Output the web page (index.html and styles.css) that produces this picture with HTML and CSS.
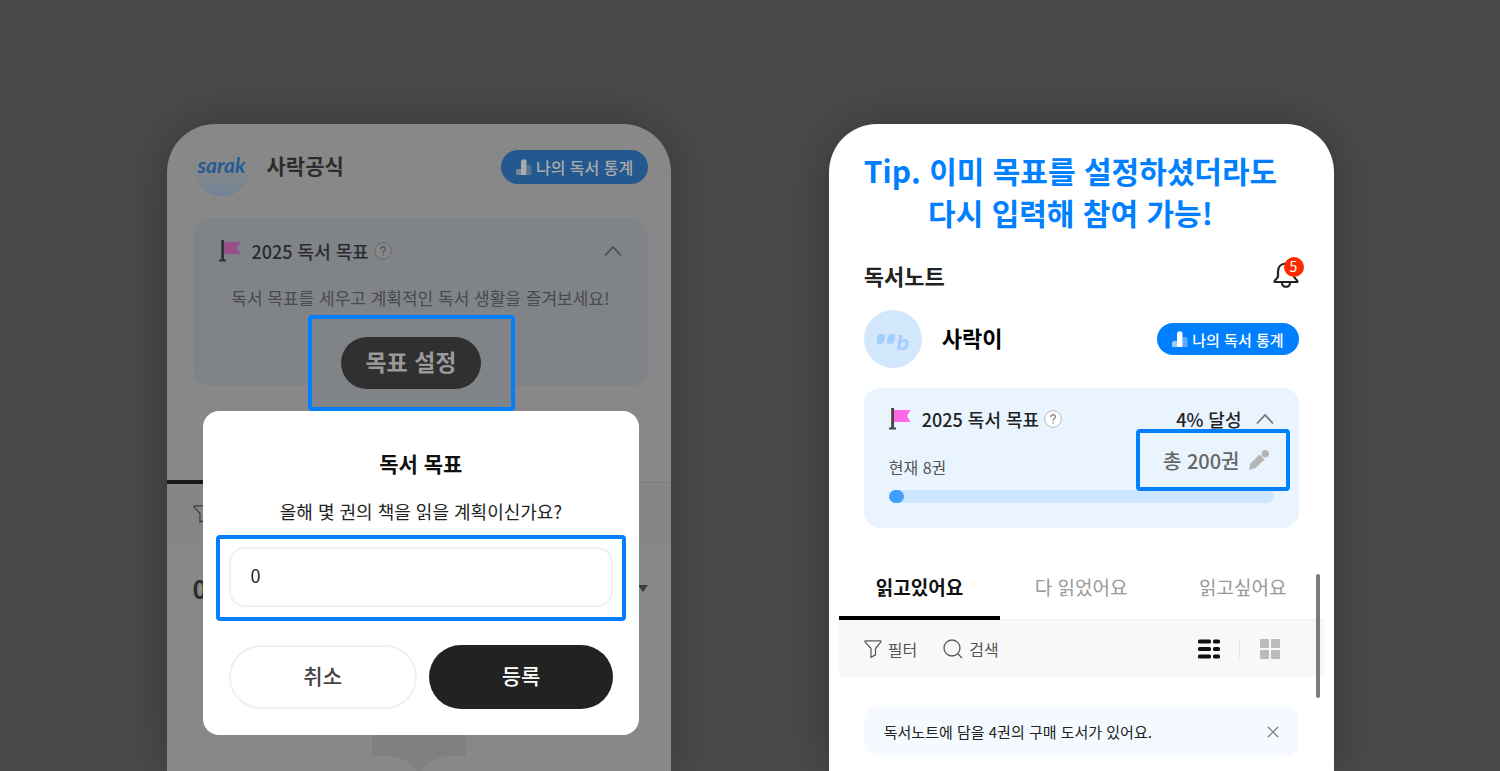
FILE: index.html
```
<!DOCTYPE html>
<html lang="ko">
<head>
    <meta charset="utf-8">
    <meta name="viewport" content="width=device-width, initial-scale=1.0">
    <title>독서 목표</title>
    <link rel="stylesheet" href="styles.css">
</head>

<body>
<svg class="defs" aria-hidden="true">
    <symbol id="flag" viewBox="0 0 22 22">
        <path class="flag-cloth" d="M4 2h17.500l-3.500 6 3.500 6H4z"/>
        <path class="flag-pole" d="M2.200 0h2.800v19.500H7V21.500H0v-2h2.200z"/>
    </symbol>
    <symbol id="bars" viewBox="0 0 16 16">
        <path d="M0 16v-4a2 2 0 0 1 2-2h3v6z" opacity=".6"/>
        <path d="M5 16V3a2.500 2.500 0 0 1 5.500 0v13z"/>
        <path d="M10.500 16V6H13.500a2 2 0 0 1 2 2v8z" opacity=".35"/>
    </symbol>
    <symbol id="help" viewBox="0 0 18 18">
        <circle class="help-ring" cx="9" cy="9" r="8.300"/>
        <path class="help-mark" d="M6.600 7.200C6.600 4 11.600 4 11.500 7 11.400 8.700 9 8.700 9 10.800M9 12.300v1.300"/>
    </symbol>
    <symbol id="chevron" viewBox="0 0 18 12">
        <path d="M1 10.500 9 2l8 8.500" fill="none" stroke="currentColor" stroke-width="1.800"/>
    </symbol>
    <symbol id="filter" viewBox="0 0 18 18">
        <path d="M1.500.8h15c.6 0 .7.600.4 1L11.500 8.500v6.300L7 17.300V8.500L1 1.800C.700 1.400.900.800 1.500.800z" fill="none" stroke="currentColor" stroke-width="1.200"/>
    </symbol>
</svg>

<div class="stage">

    <!-- 목표 설정 -->
    <section class="phone phone-dim">
        <div class="profile">
            <span class="avatar avatar-sarak">sarak</span>
            <strong class="name">사락공식</strong>
            <button type="button" class="stats"><svg width="16" height="16"><use href="#bars"/></svg>나의 독서 통계</button>
        </div>

        <div class="card">
            <div class="card-head">
                <svg class="flag" width="22" height="22"><use href="#flag"/></svg>
                <h2>2025 독서 목표</h2>
                <svg class="help" width="18" height="18"><use href="#help"/></svg>
                <button type="button" class="fold" aria-label="접기"><svg width="18" height="12"><use href="#chevron"/></svg></button>
            </div>
            <p class="card-text">독서 목표를 세우고 계획적인 독서 생활을 즐겨보세요!</p>
            <div class="mark mark-goal">
                <button type="button" class="goal-btn">목표 설정</button>
            </div>
        </div>

        <div class="tab-line"></div>
        <div class="tools">
            <svg width="18" height="18"><use href="#filter"/></svg>
        </div>
        <div class="count">
            <b>0</b>
            <span class="caret"></span>
        </div>
        <svg class="empty" width="94" height="90" viewBox="0 0 94 90">
            <path d="M0 0h94v41H77C63 42 53 49 47 58 41 49 31 42 15 41H0z"/>
        </svg>

        <form class="modal">
            <h2>독서 목표</h2>
            <label for="goal">올해 몇 권의 책을 읽을 계획이신가요?</label>
            <div class="mark mark-input">
                <input type="text" id="goal" value="0">
            </div>
            <div class="modal-btns">
                <button type="button" class="cancel">취소</button>
                <button type="button" class="submit">등록</button>
            </div>
        </form>
    </section>

    <!-- 목표 수정 -->
    <section class="phone phone-note">
        <h1 class="tip">Tip. 이미 목표를 설정하셨더라도<br>다시 입력해 참여 가능!</h1>

        <div class="title">
            <h2>독서노트</h2>
            <button type="button" class="bell" aria-label="알림">
                <svg width="26" height="28" viewBox="0 0 26 28" fill="none" stroke="#222" stroke-width="2.200">
                    <path d="M13 2.500C8 2.500 5 6 5 10.500v4.500C5 18 1.500 18 1.500 21h23C24.500 18 21 18 21 15v-4.500C21 6 18 2.500 13 2.500z" stroke-linejoin="round"/>
                    <path d="M9 22c0 5 8 5 8 0"/>
                </svg>
                <span class="badge">5</span>
            </button>
        </div>

        <div class="profile">
            <span class="avatar avatar-note">
                <svg width="20" height="12" viewBox="0 0 20 12">
                    <path d="M4 1h2.500q3 0 2.400 3l-.700 3.500q-.800 3.500-4.200 3.500H3Q0 11 .700 8L1.300 4Q2 1 4 1zM14.500 1H17q3 0 2.400 3l-.700 3.500q-.800 3.500-4.200 3.500h-1q-3 0-2.300-3l.600-4Q12.500 1 14.500 1z"/>
                </svg>
                <i>b</i>
            </span>
            <strong class="name">사락이</strong>
            <button type="button" class="stats"><svg width="16" height="16"><use href="#bars"/></svg>나의 독서 통계</button>
        </div>

        <div class="card">
            <div class="card-head">
                <svg class="flag" width="22" height="22"><use href="#flag"/></svg>
                <h2>2025 독서 목표</h2>
                <svg class="help" width="18" height="18"><use href="#help"/></svg>
                <span class="percent">4% 달성</span>
                <button type="button" class="fold" aria-label="접기"><svg width="18" height="12"><use href="#chevron"/></svg></button>
            </div>
            <div class="status">
                <span class="now">현재 8권</span>
                <button type="button" class="mark mark-total">총 200권
                    <svg width="22" height="22" viewBox="0 0 22 22">
                        <path d="M1 21l1.500-6.500L11.500 5.500l5 5L7.500 19z"/>
                        <circle cx="17.300" cy="4.700" r="3.700"/>
                    </svg>
                </button>
            </div>
            <div class="bar"><div class="bar-fill" style="width: 4%"></div></div>
        </div>

        <div class="list">
            <nav class="tabs">
                <a href="#" class="on">읽고있어요</a>
                <a href="#">다 읽었어요</a>
                <a href="#">읽고싶어요</a>
            </nav>
            <div class="tools">
                <button type="button"><svg width="18" height="18"><use href="#filter"/></svg>필터</button>
                <button type="button" class="search">
                    <svg width="20" height="20" viewBox="0 0 20 20" fill="none" stroke="currentColor" stroke-width="1.300"><circle cx="9" cy="9" r="8"/><path d="m14.500 14.500 4.500 4.500"/></svg>검색
                </button>
                <div class="views">
                    <button type="button" aria-label="목록">
                        <svg width="22" height="20" viewBox="0 0 22 20" fill="#111"><rect y=".500" width="13" height="4" rx="1.500"/><rect x="15" y=".500" width="7" height="4" rx="1.500"/><rect y="8" width="13" height="4" rx="1.500"/><rect x="15" y="8" width="7" height="4" rx="1.500"/><rect y="15.500" width="13" height="4" rx="1.500"/><rect x="15" y="15.500" width="7" height="4" rx="1.500"/></svg>
                    </button>
                    <button type="button" aria-label="격자">
                        <svg width="20" height="20" viewBox="0 0 20 20" fill="#bbb"><rect width="9" height="9" rx="1"/><rect x="11" width="9" height="9" rx="1"/><rect y="11" width="9" height="9" rx="1"/><rect x="11" y="11" width="9" height="9" rx="1"/></svg>
                    </button>
                </div>
            </div>
            <span class="scroll"></span>
        </div>

        <div class="notice">
            <p>독서노트에 담을 4권의 구매 도서가 있어요.</p>
            <button type="button" aria-label="닫기">
                <svg width="12" height="12" viewBox="0 0 12 12" stroke="#777" stroke-width="1.200"><path d="m1 1 10 10M11 1 1 11"/></svg>
            </button>
        </div>
    </section>

</div>
</body>
</html>
```
FILE: styles.css
```
* {
    box-sizing: border-box;
}

body {
    margin: 0;
    background: #4a4a4a;
    font-family: "Noto Sans CJK KR", "Noto Sans", sans-serif;
    color: #222;
}

h1, h2, p {
    margin: 0;
}

button {
    margin: 0;
    padding: 0;
    border: 0;
    background: none;
    color: inherit;
    font-family: inherit;
    cursor: pointer;
}

svg {
    display: block;
    flex: none;
}

.defs {
    position: absolute;
    width: 0;
    height: 0;
}

.stage {
    display: grid;
    grid-template-columns: 1fr 1fr;
    column-gap: 13.5%;
    height: 100vh;
    padding: 124px 11.1% 0;
    overflow: hidden;
}

.phone {
    position: relative;
    border-radius: 48px 48px 0 0;
    background: #fff;
    box-shadow: 0 0 50px rgba(0, 0, 0, .28);
}

/* common parts */
.profile {
    display: flex;
    align-items: center;
}

.avatar {
    display: flex;
    align-items: center;
    justify-content: center;
    width: 58px;
    height: 58px;
    border-radius: 50%;
}

.name {
    padding-bottom: 5px;
    font-size: 21px;
    font-weight: 700;
    line-height: 30px;
}

.stats {
    display: flex;
    align-items: center;
    justify-content: center;
    gap: 4px;
    height: 34px;
    margin-left: auto;
    padding: 0 15px;
    border-radius: 17px;
    background: #0080ff;
    color: #fff;
    font-weight: 500;
    fill: #fff;
}

.card {
    display: flow-root;
    border-radius: 16px;
    background: #e9f4ff;
}

.card-head {
    display: flex;
    align-items: center;
}

.card-head h2 {
    margin: 0 5px 0 11px;
    font-size: 18px;
    font-weight: 500;
    line-height: 26px;
}

.flag-cloth {
    fill: var(--cloth, #ff66e8);
}

.flag-pole {
    fill: var(--pole, #444);
}

.help-ring {
    fill: var(--ring, #fff);
    stroke: var(--help, #bbb);
}

.help-mark {
    fill: none;
    stroke: var(--mark, #888);
    stroke-width: 1.300;
}

.fold {
    color: #777;
}

.mark {
    border: 4px solid #0080ff;
    border-radius: 4px;
}

.tools {
    display: flex;
    align-items: center;
}

/* left screen */
.phone-dim {
    --cloth: #96508c;
    --pole: #333;
    --ring: #888;
    --help: #6a6a6a;
    --mark: #555;
    background: #888;
    color: #2c2c2c;
    overflow: hidden;
}

.phone-dim .profile {
    gap: 16px;
    padding: 14px 23px 0 26px;
}

.avatar-sarak {
    padding-bottom: 6px;
    background: linear-gradient(#888 25%, #858789 60%, #6f8297);
    color: #265a95;
    font-family: Lato, sans-serif;
    font-size: 21px;
    font-style: italic;
    font-weight: 700;
}

.phone-dim .stats {
    background: #24598f;
    color: #aaa;
    fill: #aaa;
    font-size: 16px;
}

.phone-dim .card {
    margin: 22px 23px 0 26px;
    padding: 20px 26px 0;
    background: #808489;
}

.phone-dim .fold {
    margin-left: auto;
    color: #4d4d4d;
}

.card-text {
    display: flex;
    justify-content: center;
    margin-top: 22px;
    color: #4a4a4a;
    font-size: 17px;
    line-height: 24px;
    white-space: nowrap;
}

.mark-goal {
    display: flex;
    align-items: center;
    justify-content: center;
    width: 207px;
    height: 96px;
    margin: 5px auto -25px 89px;
    background: #808489;
}

.goal-btn {
    width: 140px;
    height: 52px;
    padding-bottom: 4px;
    border-radius: 26px;
    background: #303030;
    color: #999;
    font-size: 23px;
    font-weight: 700;
}

.tab-line {
    margin-top: 94px;
    height: 4px;
    background: linear-gradient(90deg, #1a1a1a 168px, transparent 0), linear-gradient(transparent 2px, #7c7c7c 2px, #7c7c7c 3px, transparent 0);
}

.phone-dim .tools {
    height: 60px;
    padding-left: 26px;
    background: #858585;
    color: #3c3c3c;
}

.count {
    display: flex;
    align-items: center;
    justify-content: space-between;
    margin-top: 24px;
    padding: 0 23px 0 26px;
    font-size: 25px;
    line-height: 40px;
}

.caret {
    border: 5px solid transparent;
    border-top: 7px solid #3c3c3c;
    border-bottom: 0;
}

.empty {
    margin: 107px auto 0;
    fill: #808080;
}

.modal {
    position: absolute;
    top: 287px;
    left: 36px;
    right: 32px;
    padding: 37px 26px 26px;
    border-radius: 16px;
    background: #fff;
    text-align: center;
}

.modal h2 {
    color: #111;
    font-size: 21px;
    font-weight: 700;
    line-height: 30px;
}

.modal label {
    display: block;
    margin-top: 19px;
    color: #222;
    font-size: 18px;
    line-height: 28px;
}

.mark-input {
    margin: 10px -13px 0;
    padding: 8px 9px 10px;
}

.mark-input input {
    display: block;
    width: 100%;
    height: 60px;
    padding: 0 20px 4px;
    border: 2px solid #f0f0f0;
    border-radius: 16px;
    background: #fff;
    color: #222;
    font-family: inherit;
    font-size: 18px;
}

.modal-btns {
    display: flex;
    gap: 12px;
    margin-top: 24px;
}

.modal-btns button {
    flex: 1;
    height: 64px;
    padding-bottom: 4px;
    border-radius: 32px;
    font-size: 21px;
    font-weight: 500;
}

.modal-btns .cancel {
    border: 2px solid #f0f0f0;
    color: #444;
}

.modal-btns .submit {
    background: #222;
    color: #fff;
}

/* right screen */
.phone-note {
    padding: 25px 35px 0;
}

.tip {
    width: fit-content;
    color: #0080ff;
    font-size: 30px;
    font-weight: 700;
    line-height: 42px;
    text-align: center;
    white-space: nowrap;
}

.title {
    display: flex;
    align-items: center;
    justify-content: space-between;
    margin-top: 26px;
}

.title h2 {
    font-size: 22px;
    font-weight: 700;
    line-height: 32px;
}

.bell {
    position: relative;
}

.badge {
    position: absolute;
    top: -4px;
    right: -5px;
    width: 20px;
    height: 20px;
    border-radius: 50%;
    background: #ff2a00;
    color: #fff;
    font-size: 14px;
    line-height: 19px;
}

.phone-note .profile {
    gap: 20px;
    margin-top: 19px;
}

.avatar-note {
    background: #d3e7fd;
    color: #a3cffd;
    fill: #a3cffd;
}

.avatar-note i {
    padding-top: 8px;
    font-family: Inter, sans-serif;
    font-size: 20px;
    font-weight: 700;
    line-height: 24px;
}

.phone-note .name {
    color: #000;
    font-size: 22px;
}

.phone-note .stats {
    height: 32px;
    font-size: 15px;
}

.phone-note .card {
    margin-top: 20px;
    padding: 18px 25px 25px;
}

.percent {
    margin-left: auto;
    font-size: 18px;
    font-weight: 500;
    line-height: 26px;
}

.phone-note .fold {
    margin-left: 14px;
}

.status {
    display: flex;
    align-items: center;
    justify-content: space-between;
}

.now {
    padding-top: 12px;
    color: #555;
    font-size: 16px;
    line-height: 24px;
}

.mark-total {
    display: flex;
    align-items: center;
    gap: 8px;
    height: 62px;
    margin: -3px -16px -1px 0;
    padding: 0 16px 0 23px;
    border: 4px solid #0080ff;
    color: #666;
    fill: #b5b5b5;
    font-size: 20px;
    font-weight: 500;
}

.bar {
    height: 13px;
    border-radius: 7px;
    background: #cce6ff;
}

.bar-fill {
    height: 100%;
    border-radius: 7px;
    background: #409fff;
}

.list {
    position: relative;
    margin: 40px -25px 0;
}

.tabs {
    display: grid;
    grid-template-columns: 1fr 1fr 1fr;
    border-bottom: 1px solid #eee;
}

.tabs a {
    height: 52px;
    margin-bottom: -1px;
    color: #999;
    font-size: 19px;
    line-height: 38px;
    text-align: center;
    text-decoration: none;
}

.tabs .on {
    border-bottom: 4px solid #000;
    color: #111;
    font-weight: 700;
}

.phone-note .tools {
    height: 57px;
    padding: 0 44px 0 25px;
    background: #f8f8f8;
    color: #555;
}

.phone-note .tools button {
    display: flex;
    align-items: center;
    gap: 6px;
    font-size: 16px;
    line-height: 24px;
}

.phone-note .tools .search {
    margin-left: 26px;
}

.views {
    display: flex;
    margin-left: auto;
}

.views button + button {
    margin-left: 19px;
    padding-left: 20px;
    border-left: 1px solid #e8e8e8;
}

.scroll {
    position: absolute;
    top: 6px;
    right: 4px;
    width: 4px;
    height: 124px;
    border-radius: 2px;
    background: #7c7c7c;
}

.notice {
    display: flex;
    align-items: center;
    justify-content: space-between;
    margin-top: 30px;
    padding: 12px 20px;
    border-radius: 14px;
    background: #f4faff;
}

.notice p {
    font-size: 15px;
    line-height: 25px;
}
```
